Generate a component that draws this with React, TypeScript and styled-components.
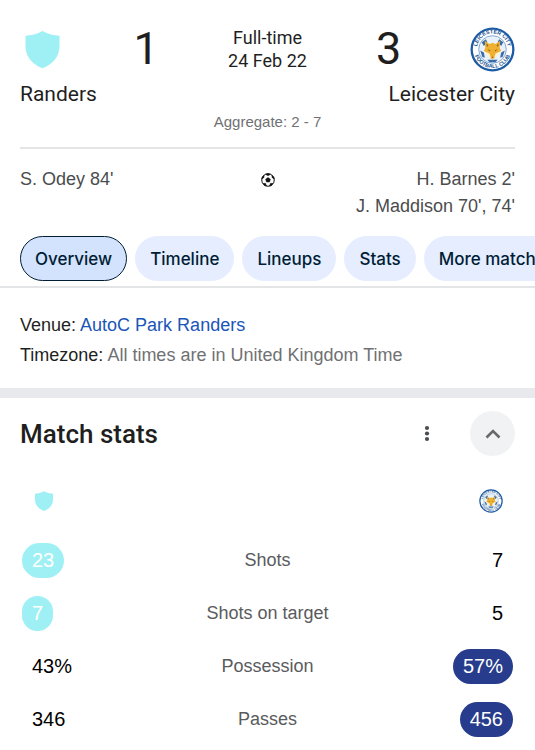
import React from "react";
import styled, { createGlobalStyle } from "styled-components";

const GlobalStyle = createGlobalStyle`
  *, *::before, *::after { box-sizing: border-box; }
  body {
    margin: 0;
    background: #fff;
    color: #1f1f1f;
    font-family: "Liberation Sans", Arial, sans-serif;
    overflow-x: hidden;
  }
`;

const display = `font-family: Roboto, "Liberation Sans", sans-serif;`;

const Header = styled.header`
  padding: 24px 20px 0;
`;

const ScoreRow = styled.div`
  display: grid;
  grid-template-columns: 45px 1fr 80px 1fr 45px;
  align-items: center;
  height: 50px;
`;

const Score = styled.span`
  ${display}
  font-size: 45px;
  line-height: 50px;
  text-align: center;
`;

const MatchStatus = styled.div`
  ${display}
  font-size: 18px;
  line-height: 23px;
  text-align: center;
  white-space: nowrap;
`;

const Names = styled.div`
  ${display}
  display: flex;
  justify-content: space-between;
  margin-top: 8px;
  font-size: 21px;
  line-height: 24px;
`;

const Aggregate = styled.p`
  margin: 6px 0 0;
  padding-bottom: 15px;
  border-bottom: 2px solid #e4e5e7;
  color: #707173;
  font-size: 15px;
  line-height: 20px;
  text-align: center;
`;

const Scorers = styled.section`
  display: grid;
  grid-template-columns: 1fr 16px 1fr;
  padding: 17px 20px 16px;
  color: #4b4c4e;
  font-size: 18px;
  line-height: 27px;
`;

const ScorerList = styled.ul<{ $end?: boolean }>`
  margin: 0;
  padding: 0;
  list-style: none;
  text-align: ${(p) => (p.$end ? "right" : "left")};
`;

const BallCell = styled.div`
  display: flex;
  align-items: center;
  justify-content: center;
  height: 27px;
`;

const Chips = styled.nav`
  display: flex;
  gap: 8px;
  padding: 0 0 5px 20px;
  overflow: hidden;
  border-bottom: 2px solid #e4e5e7;
`;

const Chip = styled.button<{ $active?: boolean }>`
  flex: none;
  height: 45px;
  padding: 0 14px;
  border: 1px solid ${(p) => (p.$active ? "#001d35" : "#e5edff")};
  border-radius: 24px;
  background: ${(p) => (p.$active ? "#d3e3fd" : "#e5edff")};
  color: #001d35;
  font-family: Inter, Roboto, sans-serif;
  font-size: 17px;
  font-weight: 500;
  white-space: nowrap;
  cursor: pointer;
`;

const Details = styled.section`
  padding: 22px 20px 18px;
  font-size: 18px;
  line-height: 30px;
`;

const Detail = styled.p`
  margin: 0;
`;

const Muted = styled.span`
  color: #707173;
`;

const VenueLink = styled.a`
  color: #1a55b8;
  text-decoration: none;
`;

const StatsSection = styled.section`
  border-top: 10px solid #e8e9ed;
`;

const StatsHeader = styled.div`
  display: flex;
  align-items: center;
  padding: 13px 20px 0;
`;

const Title = styled.h2`
  ${display}
  flex: 1;
  margin: 0;
  font-size: 26px;
  font-weight: 500;
  line-height: 32px;
`;

const IconButton = styled.button<{ $filled?: boolean }>`
  display: flex;
  align-items: center;
  justify-content: center;
  width: ${(p) => (p.$filled ? 45 : 36)}px;
  height: 45px;
  margin-left: ${(p) => (p.$filled ? 25 : 0)}px;
  padding: 0;
  border: 0;
  border-radius: 50%;
  background: ${(p) => (p.$filled ? "#f1f2f4" : "transparent")};
  cursor: pointer;
`;

const StatsTable = styled.table`
  width: 100%;
  margin-top: 12px;
  border-collapse: collapse;
  table-layout: fixed;
`;

const Team = styled.th<{ $end?: boolean }>`
  height: 66px;
  padding: ${(p) => (p.$end ? "0 32px 0 0" : "0 0 0 32px")};
  text-align: ${(p) => (p.$end ? "right" : "left")};
  svg { display: inline-block; vertical-align: middle; }
`;

const StatLabel = styled.th`
  height: 53px;
  padding: 0;
  color: #5a5b5d;
  font-size: 18px;
  font-weight: 400;
`;

const StatCell = styled.td<{ $end?: boolean }>`
  padding: 0 22px;
  text-align: ${(p) => (p.$end ? "right" : "left")};
`;

const Value = styled.span<{ $fill?: string }>`
  display: inline-block;
  padding: 0 10px;
  border-radius: 18px;
  background: ${(p) => p.$fill ?? "transparent"};
  color: ${(p) => (p.$fill ? "#fff" : "#000")};
  font-size: 20px;
  line-height: 35px;
`;

const Shield = ({ size }: { size: number }) => (
  <svg width={size} height={size} viewBox="0 0 45 45" role="img" aria-label="Randers">
    <path
      d="M22.500 4C17 7 11.500 8.500 5.500 8.800V20C6 30 12.500 37.500 22.500 41.200C32.500 37.500 39 30 39.500 20V8.800C33.500 8.500 28 7 22.500 4Z"
      fill="#9ff0f5"
    />
  </svg>
);

const Crest = ({ size, id }: { size: number; id: string }) => (
  <svg width={size} height={size} viewBox="0 0 88 88" role="img" aria-label="Leicester City">
    <defs>
      <path id={`${id}-top`} d="M14.500 51A30.500 30.500 0 1 1 73.500 51" />
      <path id={`${id}-bottom`} d="M7 43A37 37 0 0 0 81 43" />
    </defs>
    <circle cx="44" cy="44" r="43" fill="#1c5ba6" />
    <circle cx="44" cy="44" r="38.500" fill="#fff" />
    <circle cx="44" cy="44" r="27" fill="#e9f2fb" stroke="#5f92c9" strokeWidth="1.500" />
    <g fill="#1c5490" fontFamily="Liberation Sans, sans-serif" fontSize="10.500" fontWeight="700">
      <text textAnchor="middle">
        <textPath href={`#${id}-top`} startOffset="50%">LEICESTER CITY</textPath>
      </text>
      <text textAnchor="middle">
        <textPath href={`#${id}-bottom`} startOffset="50%">FOOTBALL CLUB</textPath>
      </text>
    </g>
    <path d="M23 30L31 24L34 30L27 37ZM65 30L57 24L54 30L61 37ZM20 46L27 50L29 60L24 58ZM68 46L61 50L59 60L64 58ZM34 64H54L50 69H38Z" fill="#3b6ba5" />
    <path d="M29 27L38 33L44 31L50 33L59 27L58 41L61 47L53 54L47 62H41L35 54L27 47L30 41Z" fill="#f0b030" />
    <path d="M27 47L38 52L41 60L34 56ZM61 47L50 52L47 60L54 56Z" fill="#fff2cf" />
    <path d="M32 32L36 36L33 39ZM56 32L52 36L55 39ZM34 43L40 46L38 48ZM54 43L48 46L50 48ZM42 58H46L44 61Z" fill="#8a6426" />
  </svg>
);

const Ball = () => (
  <svg width="14" height="14" viewBox="0 0 28 28" role="img" aria-label="Goals">
    <circle cx="14" cy="14" r="12.500" fill="#fff" stroke="#111" strokeWidth="2" />
    <path
      d="M14 9L18.800 12.500L17 18H11L9.200 12.500ZM9 2.500L14 5.500L19 2.500L14 1ZM1.500 12L6 9L6 4.500L2.500 8ZM26.500 12L22 9L22 4.500L25.500 8ZM4 21L9 20.500L11 26L7 25ZM24 21L19 20.500L17 26L21 25Z"
      fill="#111"
      stroke="#111"
      strokeLinejoin="round"
    />
  </svg>
);

const MoreDots = () => (
  <svg width="6" height="18" viewBox="0 0 6 18" fill="#4a4d51" aria-hidden="true">
    <circle cx="3" cy="3" r="2.100" />
    <circle cx="3" cy="8.500" r="2.100" />
    <circle cx="3" cy="14" r="2.100" />
  </svg>
);

const ChevronUp = () => (
  <svg width="16" height="10" viewBox="0 0 16 10" aria-hidden="true">
    <path d="M1.500 8.500L8 2L14.500 8.500" fill="none" stroke="#66696d" strokeWidth="2.600" />
  </svg>
);

const tabs = ["Overview", "Timeline", "Lineups", "Stats", "More matches"];

const stats = [
  { label: "Shots", home: "23", away: "7", leader: "home" },
  { label: "Shots on target", home: "7", away: "5", leader: "home" },
  { label: "Possession", home: "43%", away: "57%", leader: "away" },
  { label: "Passes", home: "346", away: "456", leader: "away" },
];

export default function App() {
  return (
    <main>
      <GlobalStyle />
      <Header>
        <ScoreRow>
          <Shield size={45} />
          <Score>1</Score>
          <MatchStatus>
            <div>Full-time</div>
            <div>24 Feb 22</div>
          </MatchStatus>
          <Score>3</Score>
          <Crest size={45} id="crest-large" />
        </ScoreRow>
        <Names>
          <span>Randers</span>
          <span>Leicester City</span>
        </Names>
        <Aggregate>Aggregate: 2 - 7</Aggregate>
      </Header>
      <Scorers aria-label="Goalscorers">
        <ScorerList>
          <li>S. Odey 84'</li>
        </ScorerList>
        <BallCell>
          <Ball />
        </BallCell>
        <ScorerList $end>
          <li>H. Barnes 2'</li>
          <li>J. Maddison 70', 74'</li>
        </ScorerList>
      </Scorers>
      <Chips aria-label="Match sections">
        {tabs.map((tab, i) => (
          <Chip key={tab} type="button" $active={i === 0} aria-pressed={i === 0}>
            {tab}
          </Chip>
        ))}
      </Chips>
      <Details>
        <Detail>
          Venue: <VenueLink href="#venue">AutoC Park Randers</VenueLink>
        </Detail>
        <Detail>
          Timezone: <Muted>All times are in United Kingdom Time</Muted>
        </Detail>
      </Details>
      <StatsSection>
        <StatsHeader>
          <Title id="match-stats">Match stats</Title>
          <IconButton type="button" aria-label="More options">
            <MoreDots />
          </IconButton>
          <IconButton type="button" aria-label="Collapse match stats" aria-expanded="true" $filled>
            <ChevronUp />
          </IconButton>
        </StatsHeader>
        <StatsTable aria-labelledby="match-stats">
          <thead>
            <tr>
              <Team scope="col">
                <Shield size={24} />
              </Team>
              <td />
              <Team scope="col" $end>
                <Crest size={24} id="crest-small" />
              </Team>
            </tr>
          </thead>
          <tbody>
            {stats.map(({ label, home, away, leader }) => (
              <tr key={label}>
                <StatCell>
                  <Value $fill={leader === "home" ? "#9ff0f5" : undefined}>{home}</Value>
                </StatCell>
                <StatLabel scope="row">{label}</StatLabel>
                <StatCell $end>
                  <Value $fill={leader === "away" ? "#273c8c" : undefined}>{away}</Value>
                </StatCell>
              </tr>
            ))}
          </tbody>
        </StatsTable>
      </StatsSection>
    </main>
  );
}
